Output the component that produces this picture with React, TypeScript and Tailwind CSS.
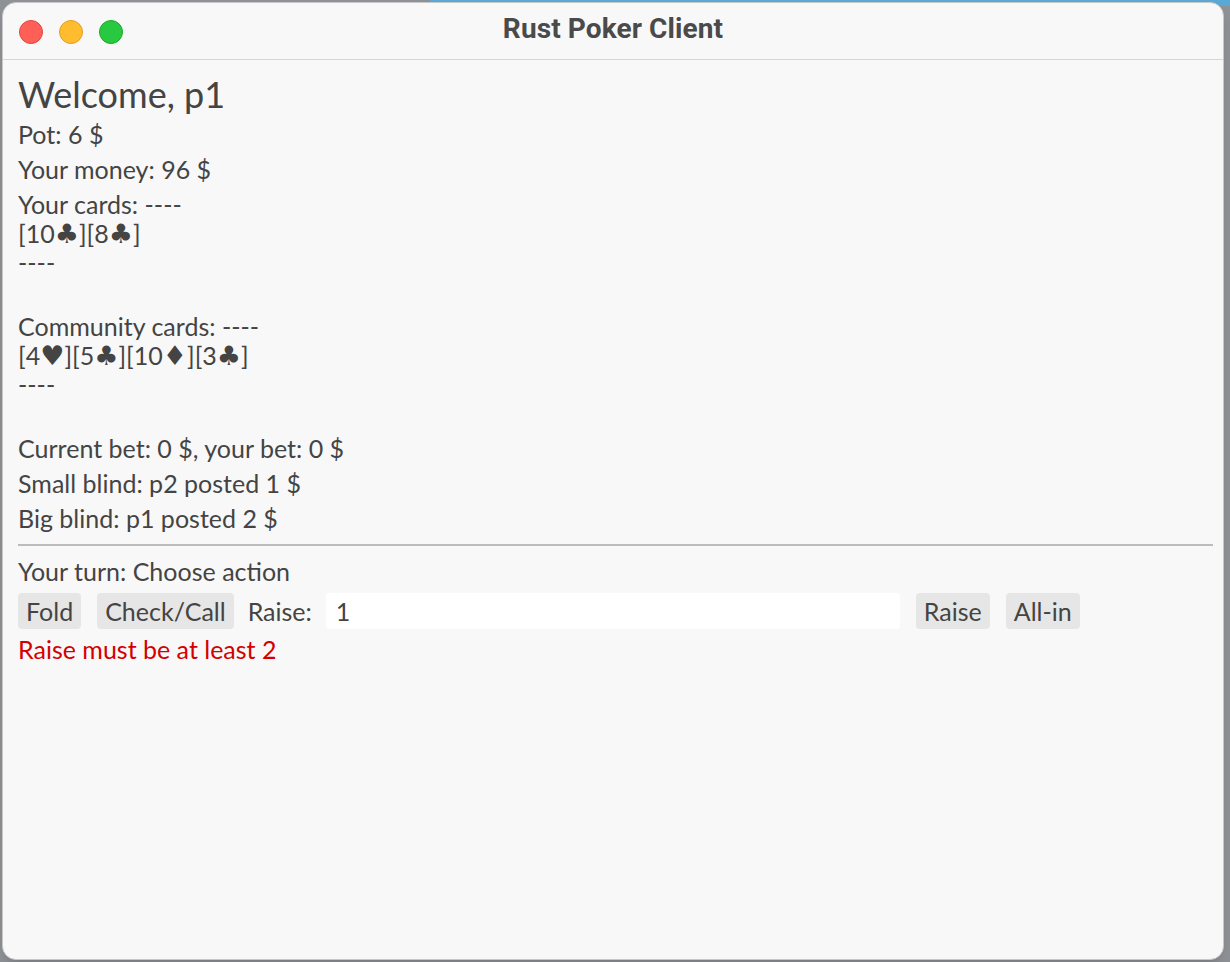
import React from "react";

const body = { fontFamily: "Lato, 'Noto Sans', sans-serif" };
const SUITS = "♣♥♦♠";

function Btn({ children }: { children: React.ReactNode }) {
  return (
    <button className="h-[36px] px-[8px] rounded-[4px] bg-[#e6e6e6] text-[#444] text-[25px] leading-[36px]">
      {children}
    </button>
  );
}

function Text({ s }: { s: string }) {
  // suits come from a fallback font and render bigger than the letters
  return (
    <>
      {Array.from(s).map((c, i) =>
        SUITS.includes(c) ? (
          <span key={i} className="text-[27px] leading-[29px]" style={{ fontFamily: "'DejaVu Sans', sans-serif" }}>
            {c}
          </span>
        ) : (
          c
        )
      )}
    </>
  );
}

function Lines({ lines }: { lines: string[] }) {
  return (
    <div className="flex flex-col">
      {lines.map((l, i) => (
        <div key={i} className="h-[29px] leading-[29px] whitespace-pre">
          <Text s={l || "\u00a0"} />
        </div>
      ))}
    </div>
  );
}

export default function App() {
  return (
    <div className="w-[1230px] h-[962px] bg-[#8e9296] overflow-hidden relative">
      <div className="absolute top-0 right-0 w-[800px] h-[6px] bg-[#5aa8d4]" />
      <div className="absolute left-[2px] top-[2px] w-[1222px] h-[958px] rounded-[14px] bg-[#f8f8f8] border border-[#c8c8c8] flex flex-col overflow-hidden shadow-lg">
        <div className="relative h-[57px] flex items-center justify-center border-b border-[#d6d6d6] shrink-0 pb-[4px]">
          <div className="absolute left-[16px] top-[17px] flex gap-[16px]">
            <span className="w-[24px] h-[24px] rounded-full bg-[#fe5f57] border border-[#e2463f]" />
            <span className="w-[24px] h-[24px] rounded-full bg-[#febc2e] border border-[#dfa123]" />
            <span className="w-[24px] h-[24px] rounded-full bg-[#28c840] border border-[#1aab29]" />
          </div>
          <span
            className="text-[28px] font-bold text-[#4a4a4a] tracking-[0.1px]"
            style={{ fontFamily: "Roboto, 'Liberation Sans', sans-serif" }}
          >
            Rust Poker Client
          </span>
        </div>
        <div className="flex flex-col gap-[6px] pl-[15px] pr-[10px] pt-[14px] text-[25px] text-[#444]" style={body}>
          <div className="h-[40px] leading-[40px] text-[36px]">Welcome, p1</div>
          <Lines lines={["Pot: 6 $"]} />
          <Lines lines={["Your money: 96 $"]} />
          <Lines lines={["Your cards: ----", "[10♣][8♣]", "----", ""]} />
          <Lines lines={["Community cards: ----", "[4♥][5♣][10♦][3♣]", "----", ""]} />
          <Lines lines={["Current bet: 0 $, your bet: 0 $"]} />
          <Lines lines={["Small blind: p2 posted 1 $"]} />
          <Lines lines={["Big blind: p1 posted 2 $"]} />
          <div className="h-[12px] flex items-center">
            <div className="w-full h-[2px] bg-[#bcbcbc]" />
          </div>
          <Lines lines={["Your turn: Choose action"]} />
          <div className="flex items-center gap-[16px] mt-[1px]">
            <Btn>Fold</Btn>
            <Btn>Check/Call</Btn>
            <span className="leading-[36px] -ml-[2px]">Raise:</span>
            <div className="w-[574px] h-[36px] bg-white rounded-[3px] pl-[10px] leading-[36px] -ml-[2px]">1</div>
            <Btn>Raise</Btn>
            <Btn>All-in</Btn>
          </div>
          <div className="h-[29px] leading-[29px] text-[#d40000]">Raise must be at least 2</div>
        </div>
      </div>
    </div>
  );
}
